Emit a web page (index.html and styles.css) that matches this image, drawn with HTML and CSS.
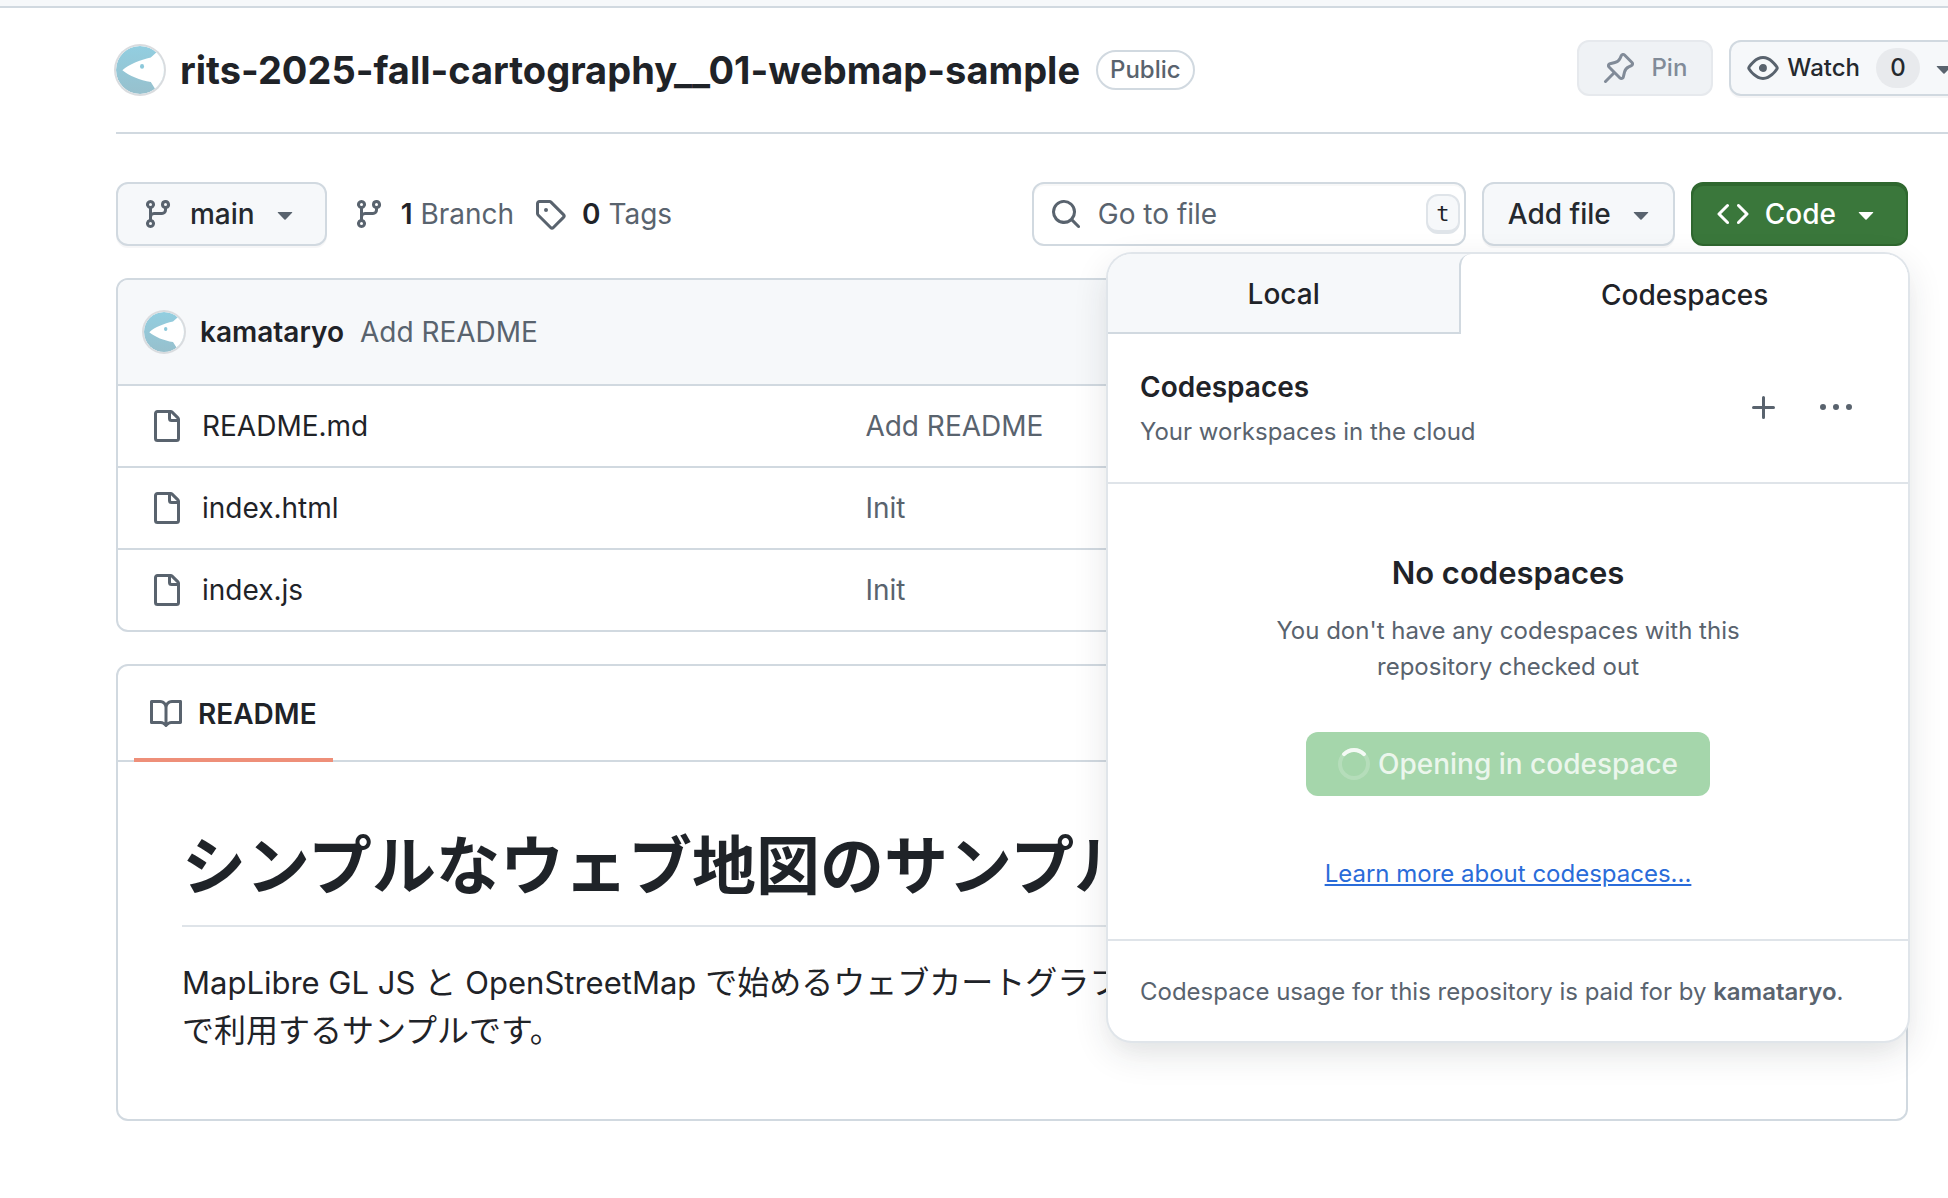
FILE: index.html
```html
<!DOCTYPE html>
<html lang="en">
<head>
<meta charset="utf-8">
<meta name="viewport" content="width=device-width, initial-scale=1">
<title>rits-2025-fall-cartography__01-webmap-sample</title>
<link rel="stylesheet" href="styles.css">
</head>
<body>
<svg class="sprite" aria-hidden="true">
  <symbol id="i-branch" viewBox="0 0 16 16"><path d="M9.5 3.25a2.25 2.25 0 1 1 3 2.122V6A2.5 2.5 0 0 1 10 8.5H6a1 1 0 0 0-1 1v1.128a2.251 2.251 0 1 1-1.5 0V5.372a2.25 2.25 0 1 1 1.5 0v1.836A2.493 2.493 0 0 1 6 7h4a1 1 0 0 0 1-1v-.628A2.25 2.25 0 0 1 9.5 3.25Zm-6 0a.75.75 0 1 0 1.5 0 .75.75 0 0 0-1.5 0Zm8.25-.75a.75.75 0 1 0 0 1.5.75.75 0 0 0 0-1.5ZM4.25 12a.75.75 0 1 0 0 1.5.75.75 0 0 0 0-1.5Z"/></symbol>
  <symbol id="i-tag" viewBox="0 0 16 16"><path d="M1 7.775V2.75C1 1.784 1.784 1 2.75 1h5.025c.464 0 .91.184 1.238.513l6.25 6.25a1.75 1.75 0 0 1 0 2.474l-5.026 5.026a1.75 1.75 0 0 1-2.474 0l-6.25-6.25A1.752 1.752 0 0 1 1 7.775Zm1.5 0c0 .066.026.13.073.177l6.25 6.25a.25.25 0 0 0 .354 0l5.025-5.025a.25.25 0 0 0 0-.354l-6.25-6.25a.25.25 0 0 0-.177-.073H2.75a.25.25 0 0 0-.25.25ZM6 5a1 1 0 1 1 0 2 1 1 0 0 1 0-2Z"/></symbol>
  <symbol id="i-search" viewBox="0 0 16 16"><path d="M10.68 11.74a6 6 0 0 1-7.922-8.982 6 6 0 0 1 8.982 7.922l3.04 3.04a.749.749 0 0 1-.326 1.275.749.749 0 0 1-.734-.215ZM11.5 7a4.499 4.499 0 1 0-8.997 0A4.499 4.499 0 0 0 11.5 7Z"/></symbol>
  <symbol id="i-caret" viewBox="0 0 16 16"><path d="m4.427 7.427 3.396 3.396a.25.25 0 0 0 .354 0l3.396-3.396A.25.25 0 0 0 11.396 7H4.604a.25.25 0 0 0-.177.427Z"/></symbol>
  <symbol id="i-code" viewBox="0 0 16 16"><path d="m11.28 3.22 4.25 4.25a.75.75 0 0 1 0 1.06l-4.25 4.25a.749.749 0 0 1-1.275-.326.749.749 0 0 1 .215-.734L13.94 8l-3.72-3.72a.749.749 0 0 1 .326-1.275.749.749 0 0 1 .734.215Zm-6.56 0a.751.751 0 0 1 1.042.018.751.751 0 0 1 .018 1.042L2.06 8l3.72 3.72a.749.749 0 0 1-.326 1.275.749.749 0 0 1-.734-.215L.47 8.53a.75.75 0 0 1 0-1.06Z"/></symbol>
  <symbol id="i-file" viewBox="0 0 16 16"><path d="M2 1.75C2 .784 2.784 0 3.75 0h6.586c.464 0 .909.184 1.237.513l2.914 2.914c.329.328.513.773.513 1.237v9.586A1.75 1.75 0 0 1 13.25 16h-9.5A1.75 1.75 0 0 1 2 14.25Zm1.75-.25a.25.25 0 0 0-.25.25v12.5c0 .138.112.25.25.25h9.5a.25.25 0 0 0 .25-.25V6h-2.75A1.75 1.75 0 0 1 9 4.25V1.5Zm6.75.062V4.25c0 .138.112.25.25.25h2.688l-.011-.013-2.914-2.914-.013-.011Z"/></symbol>
  <symbol id="i-book" viewBox="0 0 16 16"><path d="M0 1.75A.75.75 0 0 1 .75 1h4.253c1.227 0 2.317.59 3 1.501A3.743 3.743 0 0 1 11.006 1h4.245a.75.75 0 0 1 .75.75v10.5a.75.75 0 0 1-.75.75h-4.507a2.25 2.25 0 0 0-1.591.659l-.622.621a.75.75 0 0 1-1.06 0l-.622-.621A2.25 2.25 0 0 0 5.258 13H.75a.75.75 0 0 1-.75-.75Zm7.251 10.324.004-5.073-.002-2.253A2.25 2.25 0 0 0 5.003 2.5H1.5v9h3.757a3.75 3.75 0 0 1 1.994.574ZM8.755 4.75l-.004 7.322a3.752 3.752 0 0 1 1.992-.572H14.5v-9h-3.495a2.25 2.25 0 0 0-2.25 2.25Z"/></symbol>
  <symbol id="i-eye" viewBox="0 0 16 16"><path d="M8 2c1.981 0 3.671.992 4.933 2.078 1.27 1.091 2.187 2.345 2.637 3.023a1.62 1.62 0 0 1 0 1.798c-.45.678-1.367 1.932-2.637 3.023C11.67 13.008 9.981 14 8 14c-1.981 0-3.671-.992-4.933-2.078C1.797 10.83.88 9.576.43 8.898a1.62 1.62 0 0 1 0-1.798c.45-.677 1.367-1.931 2.637-3.022C4.33 2.992 6.019 2 8 2ZM1.679 7.932a.12.12 0 0 0 0 .136c.411.622 1.241 1.75 2.366 2.717C5.176 11.758 6.527 12.5 8 12.5c1.473 0 2.825-.742 3.955-1.715 1.124-.967 1.954-2.096 2.366-2.717a.12.12 0 0 0 0-.136c-.412-.621-1.242-1.75-2.366-2.717C10.824 4.242 9.473 3.5 8 3.5c-1.473 0-2.825.742-3.955 1.715-1.124.967-1.954 2.096-2.366 2.717ZM8 10a2 2 0 1 1-.001-3.999A2 2 0 0 1 8 10Z"/></symbol>
  <symbol id="i-pin" viewBox="0 0 16 16"><path d="m11.294.984 3.722 3.722a1.75 1.75 0 0 1-.504 2.826l-1.327.613a3.089 3.089 0 0 0-1.707 2.084l-.584 2.454c-.317 1.332-1.972 1.8-2.94.832L5.75 11.311 1.78 15.28a.749.749 0 1 1-1.06-1.06l3.969-3.97-2.204-2.204c-.968-.968-.5-2.623.832-2.94l2.454-.584a3.08 3.08 0 0 0 2.084-1.707l.613-1.327a1.75 1.75 0 0 1 2.826-.504ZM6.283 9.723l2.732 2.731a.25.25 0 0 0 .42-.119l.584-2.454a4.586 4.586 0 0 1 2.537-3.098l1.328-.613a.25.25 0 0 0 .072-.404l-3.722-3.722a.25.25 0 0 0-.404.072l-.613 1.328a4.584 4.584 0 0 1-3.098 2.537l-2.454.584a.25.25 0 0 0-.119.42l2.731 2.732Z"/></symbol>
  <symbol id="i-plus" viewBox="0 0 16 16"><path d="M7.75 2a.75.75 0 0 1 .75.75V7h4.25a.75.75 0 0 1 0 1.5H8.5v4.25a.75.75 0 0 1-1.5 0V8.5H2.75a.75.75 0 0 1 0-1.5H7V2.75A.75.75 0 0 1 7.75 2Z"/></symbol>
  <symbol id="i-kebab" viewBox="0 0 16 16"><path d="M8 9a1.5 1.5 0 1 0 0-3 1.5 1.5 0 0 0 0 3ZM1.5 9a1.5 1.5 0 1 0 0-3 1.5 1.5 0 0 0 0 3Zm13 0a1.5 1.5 0 1 0 0-3 1.5 1.5 0 0 0 0 3Z"/></symbol>
  <symbol id="i-avatar" viewBox="0 0 40 40">
    <circle cx="20" cy="20" r="20" fill="url(#sea)"/>
    <path d="M5.3 20.2C11 15 20 11.500 29 9.500L33.800 5.200A20 20 0 0 1 32.500 35.600L29 30C20 28.500 11 25 5.300 20.200Z" fill="#fff"/>
    <ellipse cx="21.700" cy="17" rx="1.700" ry="2" fill="#8cc8da"/>
  </symbol>
  <linearGradient id="sea" x1="0" y1="0" x2="0" y2="1"><stop offset="0" stop-color="#92cee0"/><stop offset="1" stop-color="#97c0cd"/></linearGradient>
</svg>

<div class="page">
  <div class="topbar"></div>

  <header class="repo-head">
    <svg class="avatar avatar-lg" role="img" aria-label="kamataryo"><use href="#i-avatar"/></svg>
    <h1 class="repo-name">rits-2025-fall-cartography__01-webmap-sample</h1>
    <span class="label">Public</span>
    <div class="repo-actions">
      <button class="btn btn-sm btn-off" type="button" disabled><svg class="icon"><use href="#i-pin"/></svg>Pin</button>
      <button class="btn btn-sm btn-watch" type="button"><svg class="icon"><use href="#i-eye"/></svg>Watch<span class="counter">0</span><svg class="icon"><use href="#i-caret"/></svg></button>
    </div>
  </header>

  <main class="content">
    <div class="toolbar">
      <button class="btn" type="button"><svg class="icon"><use href="#i-branch"/></svg>main<svg class="icon caret"><use href="#i-caret"/></svg></button>
      <nav class="refs">
        <a href="#branches"><svg class="icon"><use href="#i-branch"/></svg><span><b>1</b> Branch</span></a>
        <a href="#tags"><svg class="icon"><use href="#i-tag"/></svg><span><b>0</b> Tags</span></a>
      </nav>
      <label class="search">
        <svg class="icon"><use href="#i-search"/></svg>
        <input type="text" placeholder="Go to file" aria-label="Go to file">
        <kbd>t</kbd>
      </label>
      <button class="btn btn-add" type="button">Add file<svg class="icon caret"><use href="#i-caret"/></svg></button>
      <div class="code-menu">
        <button class="btn btn-primary" type="button" aria-expanded="true"><svg class="icon"><use href="#i-code"/></svg>Code<svg class="icon caret"><use href="#i-caret"/></svg></button>
        <section class="popover" aria-label="Code">
          <div class="tabs" role="tablist">
            <button class="tab" type="button" role="tab" aria-selected="false">Local</button>
            <button class="tab tab-on" type="button" role="tab" aria-selected="true">Codespaces</button>
          </div>
          <div class="cs-head">
            <div>
              <h2>Codespaces</h2>
              <p>Your workspaces in the cloud</p>
            </div>
            <div class="cs-tools">
              <button type="button" aria-label="Create a codespace"><svg class="icon"><use href="#i-plus"/></svg></button>
              <button type="button" aria-label="More options"><svg class="icon"><use href="#i-kebab"/></svg></button>
            </div>
          </div>
          <div class="cs-empty">
            <h3>No codespaces</h3>
            <p>You don't have any codespaces with this repository checked out</p>
            <button class="btn-opening" type="button" disabled>
              <svg class="icon" viewBox="0 0 16 16" fill="none" stroke="#fff" stroke-width="2"><circle cx="8" cy="8" r="7" stroke-opacity=".18"/><path d="M3.050 3.050A7 7 0 0 1 12.950 3.050" stroke-opacity=".85" stroke-linecap="round"/></svg>
              Opening in codespace
            </button>
            <a href="#learn">Learn more about codespaces...</a>
          </div>
          <p class="cs-foot">Codespace usage for this repository is paid for by <b>kamataryo</b>.</p>
        </section>
      </div>
    </div>

    <section class="box">
      <div class="commit">
        <svg class="avatar" role="img" aria-label="kamataryo"><use href="#i-avatar"/></svg>
        <a class="author" href="#kamataryo">kamataryo</a>
        <a class="muted" href="#commit">Add README</a>
      </div>
      <table class="files">
        <tr><td class="name"><a href="#readme-md"><svg class="icon"><use href="#i-file"/></svg>README.md</a></td><td><a class="muted" href="#commit">Add README</a></td></tr>
        <tr><td class="name"><a href="#index-html"><svg class="icon"><use href="#i-file"/></svg>index.html</a></td><td><a class="muted" href="#init">Init</a></td></tr>
        <tr><td class="name"><a href="#index-js"><svg class="icon"><use href="#i-file"/></svg>index.js</a></td><td><a class="muted" href="#init">Init</a></td></tr>
      </table>
    </section>

    <section class="box">
      <nav class="readme-nav"><a href="#readme"><svg class="icon"><use href="#i-book"/></svg>README</a></nav>
      <article class="markdown" lang="ja">
        <h1>シンプルなウェブ地図のサンプル</h1>
        <p><span lang="en">MapLibre GL JS</span> と <span lang="en">OpenStreetMap</span> で始めるウェブカートグラフ<br>で利用するサンプルです。</p>
      </article>
    </section>
  </main>
</div>
</body>
</html>
```
FILE: styles.css
```css
:root {
  --fg: #1f2328;
  --muted: #59636e;
  --line: #d1d9e0;
  --line-soft: #dfe4e9;
  --subtle: #f6f8fa;
}

* { box-sizing: border-box; }

body {
  margin: 0;
  background: #fff;
  color: var(--fg);
  font: 400 28px/42px Inter, "Noto Sans CJK JP", sans-serif;
}

h1, h2, h3, p { margin: 0; }
a { color: inherit; text-decoration: none; }
b { font-weight: 600; }
button, input { font: inherit; color: inherit; }

.sprite { position: absolute; width: 0; height: 0; }
.page { overflow-x: clip; }

.icon {
  flex: none;
  display: block;
  width: 32px;
  height: 32px;
  fill: currentColor;
  color: var(--muted);
}

.avatar {
  flex: none;
  width: 40px;
  height: 40px;
  border-radius: 50%;
  box-shadow: 0 0 0 2px #d9dcdf;
}
.avatar-lg { width: 48px; height: 48px; }

.muted { color: var(--muted); }

.topbar {
  height: 8px;
  background: var(--subtle);
  border-bottom: 2px solid var(--line);
}

/* Repository header */
.repo-head {
  display: flex;
  align-items: center;
  height: 126px;
  margin: 0 -30px 0 116px;
  border-bottom: 2px solid var(--line);
}
.repo-name {
  margin: 0 16px;
  font-size: 38px;
  line-height: 60px;
  font-weight: 700;
  white-space: nowrap;
}
.label {
  height: 40px;
  padding: 0 12px;
  border: 2px solid var(--line);
  border-radius: 20px;
  color: var(--muted);
  font-size: 24px;
  line-height: 36px;
  font-weight: 500;
}
.repo-actions {
  display: flex;
  gap: 16px;
  margin-left: auto;
  padding-bottom: 4px;
}

/* Buttons */
.btn {
  display: flex;
  align-items: center;
  gap: 16px;
  height: 64px;
  padding: 0 24px;
  border: 2px solid var(--line);
  border-radius: 12px;
  background: var(--subtle);
  box-shadow: 0 2px 0 rgba(31, 35, 40, .04);
  color: #25292e;
  font-weight: 500;
  white-space: nowrap;
}
.caret { margin-left: -2px; }
.btn-sm { height: 56px; font-size: 24px; }
.btn-off {
  border-color: #e6e9ed;
  background: #eff2f5;
  box-shadow: none;
  color: #818b98;
}
.btn-off .icon { color: inherit; }
.btn-watch { gap: 8px; padding: 0 16px; }
.btn-add { padding-right: 16px; }
.btn-primary {
  border-color: #2f672f;
  background: #3a773b;
  box-shadow: inset 0 2px 0 #2f672f;
  color: #fff;
}
.btn-primary .icon { color: inherit; }
.counter {
  min-width: 44px;
  height: 40px;
  margin-left: 8px;
  border-radius: 20px;
  background: #e8eaed;
  line-height: 40px;
  text-align: center;
}

/* Toolbar */
.content { padding: 48px 40px 48px 116px; }
.toolbar {
  display: flex;
  align-items: center;
  gap: 16px;
  margin-bottom: 32px;
}
.refs {
  display: flex;
  gap: 20px;
  margin: 0 auto 0 10px;
  color: var(--muted);
}
.refs a { display: flex; align-items: center; gap: 16px; }
.refs b { color: var(--fg); }
.search {
  display: flex;
  align-items: center;
  gap: 16px;
  width: 434px;
  height: 64px;
  padding: 0 4px 0 16px;
  border: 2px solid var(--line);
  border-radius: 12px;
  box-shadow: inset 0 2px 0 rgba(31, 35, 40, .03);
}
.search input {
  flex: 1;
  min-width: 0;
  padding: 0;
  border: 0;
  outline: 0;
  background: none;
}
.search input::placeholder { color: var(--muted); opacity: 1; }
kbd {
  width: 34px;
  height: 40px;
  border: 2px solid #dfe4e9;
  border-bottom-width: 4px;
  border-radius: 12px;
  background: var(--subtle);
  font: 22px/36px "DejaVu Sans Mono", monospace;
  text-align: center;
}

/* Code popover */
.code-menu { position: relative; }
.popover {
  position: absolute;
  top: calc(100% + 8px);
  right: 0;
  z-index: 1;
  width: 800px;
  border-radius: 24px;
  background: #fff;
  box-shadow: 0 0 0 2px #e0e5ea, 0 12px 24px -6px rgba(37, 41, 46, .04), 0 12px 36px rgba(37, 41, 46, .12);
}
.tabs {
  display: flex;
  overflow: hidden;
  border-radius: 24px 24px 0 0;
  background: var(--subtle);
}
.tab {
  flex: 1 1 auto;
  height: 80px;
  padding: 2px 0 0;
  border: 0;
  border-bottom: 2px solid var(--line);
  background: none;
  font-weight: 500;
}
.tab-on {
  border-bottom: 0;
  border-left: 2px solid var(--line);
  border-radius: 12px 0 0 0;
  background: #fff;
}
.cs-head {
  display: flex;
  align-items: center;
  justify-content: space-between;
  padding: 32px 52px 32px 32px;
  border-bottom: 2px solid var(--line-soft);
}
.cs-head h2 { margin-bottom: 6px; font-size: 28px; line-height: 42px; font-weight: 600; }
.popover p, .cs-empty a { color: var(--muted); font-size: 24px; line-height: 36px; }
.cs-tools { display: flex; gap: 32px; }
.cs-tools button { padding: 4px; border: 0; background: none; }
.cs-empty {
  display: flex;
  flex-direction: column;
  align-items: center;
  padding: 65px 0 47px;
  border-bottom: 2px solid var(--line-soft);
  text-align: center;
}
.cs-empty h3 { font-size: 31px; line-height: 48px; font-weight: 600; }
.cs-empty p { max-width: 480px; margin: 16px 0 47px; }
.btn-opening {
  display: flex;
  align-items: center;
  gap: 8px;
  height: 64px;
  padding: 0 32px;
  border: 0;
  border-radius: 12px;
  background: #a5d6ab;
  color: rgba(255, 255, 255, .8);
  font-weight: 500;
}
.btn-opening .icon { fill: none; }
.cs-empty a {
  margin-top: 60px;
  color: #2a6cd9;
  text-decoration: underline;
}
.popover .cs-foot { padding: 33px 32px 31px; }

/* Boxes */
.box {
  margin-bottom: 32px;
  border: 2px solid var(--line);
  border-radius: 12px;
}
.commit {
  display: flex;
  align-items: center;
  gap: 16px;
  height: 106px;
  padding: 0 26px;
  border-bottom: 2px solid var(--line);
  border-radius: 10px 10px 0 0;
  background: var(--subtle);
}
.author { font-weight: 600; }
.files {
  width: 100%;
  table-layout: fixed;
  border-spacing: 0;
}
.files td { height: 80px; padding: 0; }
.files tr + tr td { height: 82px; border-top: 2px solid var(--line); }
.files .name { width: 41.8%; padding-left: 32px; }
.name a { display: flex; align-items: center; gap: 20px; }

.readme-nav {
  display: flex;
  height: 96px;
  padding-left: 16px;
  box-shadow: inset 0 -2px 0 var(--line);
}
.readme-nav a {
  display: flex;
  align-items: center;
  gap: 16px;
  padding: 4px 16px 0;
  border-bottom: 4px solid #ee8f79;
  font-weight: 600;
}
.markdown { padding: 64px; font-size: 32px; line-height: 48px; }
.markdown p span { font-size: 31px; }
.markdown h1 {
  margin-bottom: 32px;
  padding-bottom: 19px;
  border-bottom: 2px solid var(--line-soft);
  font-size: 64px;
  line-height: 80px;
  font-weight: 600;
}
```
